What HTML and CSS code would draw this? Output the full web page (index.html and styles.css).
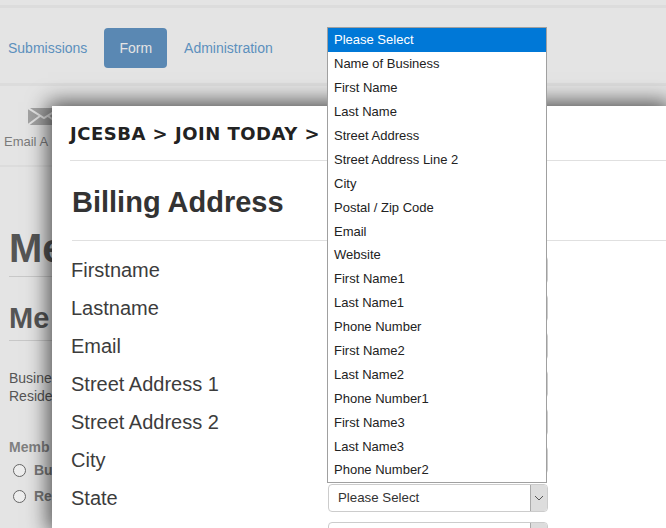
FILE: index.html
```html
<!DOCTYPE html>
<html lang="en">
<head>
    <meta charset="UTF-8">
    <meta name="viewport" content="width=device-width, initial-scale=1.0">
    <title>Form Builder</title>
    <link rel="stylesheet" href="styles.css">
</head>
<body>
    <div class="page">
        <nav class="tabs">
            <a class="tab">Submissions</a>
            <a class="tab active">Form</a>
            <a class="tab">Administration</a>
        </nav>
        <div class="toolbar">
            <div class="tool">
                <svg class="tool-icon" width="32" height="17" viewBox="0 0 32 17">
                    <rect width="32" height="17" fill="#a3a3a3"/>
                    <path d="M0 0 L16 10 L32 0 M0 17 L12 8 M32 17 L20 8" fill="none" stroke="#e4e4e4" stroke-width="2"/>
                </svg>
                <span>Email A</span>
            </div>
        </div>
        <div class="content">
            <h1>Me</h1>
            <h2>Me</h2>
            <p>Busine<br>Reside</p>
            <h4>Memb</h4>
            <label class="radio"><span class="dot"></span>Bu</label>
            <label class="radio"><span class="dot"></span>Re</label>
        </div>
    </div>

    <div class="modal">
        <div class="crumbs">JCESBA &gt; JOIN TODAY &gt;</div>
        <div class="modal-body">
            <h3>Billing Address</h3>
            <div class="row"><label>Firstname</label><div class="field"></div></div>
            <div class="row"><label>Lastname</label><div class="field"></div></div>
            <div class="row"><label>Email</label><div class="field"></div></div>
            <div class="row"><label>Street Address 1</label><div class="field"></div></div>
            <div class="row"><label>Street Address 2</label><div class="field"></div></div>
            <div class="row"><label>City</label><div class="field"></div></div>
            <div class="row">
                <label>State</label>
                <div class="field select">
                    <span>Please Select</span>
                    <span class="arrow"><svg width="10" height="6" viewBox="0 0 10 6"><path d="M1 1 L5 5 L9 1" fill="none" stroke="#555" stroke-width="1"/></svg></span>
                </div>
            </div>
            <div class="row">
                <label></label>
                <div class="field select">
                    <span></span>
                    <span class="arrow"></span>
                </div>
            </div>
        </div>
    </div>

    <ul class="dropdown">
        <li class="selected">Please Select</li>
        <li>Name of Business</li>
        <li>First Name</li>
        <li>Last Name</li>
        <li>Street Address</li>
        <li>Street Address Line 2</li>
        <li>City</li>
        <li>Postal / Zip Code</li>
        <li>Email</li>
        <li>Website</li>
        <li>First Name1</li>
        <li>Last Name1</li>
        <li>Phone Number</li>
        <li>First Name2</li>
        <li>Last Name2</li>
        <li>Phone Number1</li>
        <li>First Name3</li>
        <li>Last Name3</li>
        <li>Phone Number2</li>
    </ul>
</body>
</html>
```

FILE: styles.css
```css
html, body {
    margin: 0;
    height: 100%;
    overflow: hidden;
}
body {
    position: relative;
    font-family: "Liberation Sans", Arial, sans-serif;
    background-color: #e4e4e4;
    color: #333;
}
.page {
    height: 528px;
    padding-top: 5px;
    box-sizing: border-box;
    overflow: hidden;
}
.tabs {
    display: flex;
    align-items: center;
    height: 70px;
    border-top: 3px solid #dcdcdc;
    border-bottom: 3px solid #dcdcdc;
    padding: 5px 8px 0;
    gap: 17px;
}
.tab {
    font-size: 14px;
    color: #5c90bd;
    line-height: 40px;
}
.tab.active {
    background-color: #5a88b3;
    color: #e4e4e4;
    border-radius: 4px;
    padding: 0 15px;
}
.toolbar {
    height: 79px;
    border-bottom: 2px solid #dcdcdc;
}
.tool {
    display: flex;
    flex-direction: column;
    align-items: center;
    width: 80px;
    padding-top: 22px;
    margin-left: 4px;
    font-size: 13px;
    color: #7b7b7b;
    white-space: nowrap;
}
.tool-icon {
    margin-bottom: 9px;
}
.tool span {
    align-self: flex-start;
}
.content {
    padding: 0 9px;
    color: #555;
}
.content h1 {
    font-size: 40px;
    margin: 0;
    padding: 58px 0 5px;
    line-height: 46px;
    border-bottom: 1px solid #c8c8c8;
}
.content h2 {
    font-size: 29px;
    margin: 0;
    padding: 24px 0 5px;
    line-height: 34px;
    border-bottom: 1px solid #c8c8c8;
}
.content p {
    font-size: 14px;
    line-height: 18px;
    margin: 28px 0 33px;
}
.content h4 {
    font-size: 14px;
    color: #808080;
    line-height: 18px;
    margin: 0 0 1px;
}
.radio {
    display: flex;
    align-items: center;
    gap: 8px;
    height: 26px;
    margin-left: 4px;
    font-size: 14px;
    font-weight: bold;
    color: #777;
}
.dot {
    width: 11px;
    height: 11px;
    border: 1px solid #666;
    border-radius: 50%;
    background-color: #eee;
}
.modal {
    position: absolute;
    left: 52px;
    top: 106px;
    right: 0;
    bottom: 0;
    overflow: hidden;
    background-color: #fff;
    box-shadow: 0 0 20px 4px rgba(0, 0, 0, 0.65);
}
.crumbs {
    margin-left: 18px;
    height: 54px;
    line-height: 55px;
    border-bottom: 1px solid #e0e0e0;
    font-family: "DejaVu Sans", Verdana, sans-serif;
    font-size: 18px;
    font-weight: bold;
    letter-spacing: 0.5px;
    color: #222;
    white-space: nowrap;
}
.modal-body {
    padding: 0 0 0 20px;
}
.modal-body h3 {
    font-size: 29px;
    line-height: 34px;
    margin: 0 0 10px;
    padding: 24px 0 21px;
    border-bottom: 1px solid #e0e0e0;
    color: #333;
}
.row {
    display: flex;
    align-items: center;
    height: 38px;
}
.row label {
    width: 257px;
    margin-left: -1px;
    font-size: 20px;
    color: #3c3c3c;
}
.field {
    display: flex;
    box-sizing: border-box;
    width: 220px;
    height: 28px;
    border: 1px solid #ccc;
    border-radius: 4px;
    font-size: 13.3px;
}
.select span:first-child {
    flex: 1;
    padding-left: 9px;
    line-height: 26px;
}
.arrow {
    display: flex;
    align-items: center;
    justify-content: center;
    width: 16px;
    background-color: #ddd;
    border-left: 1px solid #aaa;
    border-radius: 0 3px 3px 0;
}
.dropdown {
    position: absolute;
    left: 327px;
    top: 27px;
    display: flex;
    flex-direction: column;
    box-sizing: border-box;
    width: 220px;
    height: 456px;
    margin: 0;
    padding: 0;
    list-style: none;
    background-color: #fff;
    border: 1px solid #a0a0a0;
    font-size: 13px;
    color: #222;
}
.dropdown li {
    flex: 1;
    display: flex;
    align-items: center;
    padding-left: 6px;
}
.dropdown .selected {
    background-color: #0078d7;
    color: #fff;
}
```
